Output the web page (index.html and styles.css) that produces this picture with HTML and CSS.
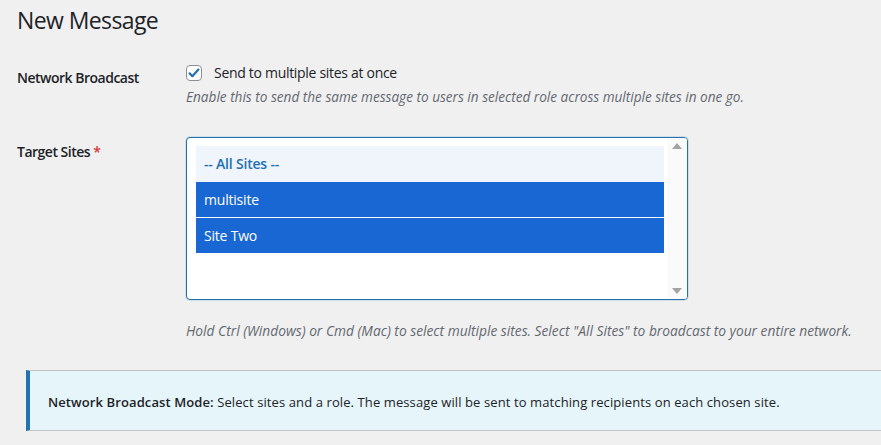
FILE: index.html
```html
<!DOCTYPE html>
<html lang="en">
<head>
  <meta charset="UTF-8">
  <meta name="viewport" content="width=device-width, initial-scale=1.0">
  <title>New Message</title>
  <link rel="stylesheet" href="styles.css">
</head>
<body>
  <div class="wrap">
    <h1>New Message</h1>

    <div class="form-table">
      <div class="row row-broadcast">
        <div class="label">Network Broadcast</div>
        <div class="field">
          <label class="check">
            <span class="checkbox">
              <svg viewBox="0 0 16 16" width="16" height="16">
                <path d="M3.6 8.4l2.8 2.8 6-6.6" fill="none" stroke="#2271b1" stroke-width="2.2" stroke-linecap="round" stroke-linejoin="round"/>
              </svg>
            </span>
            Send to multiple sites at once
          </label>
          <p class="description">Enable this to send the same message to users in selected role across multiple sites in one go.</p>
        </div>
      </div>

      <div class="row row-sites">
        <div class="label">Target Sites <span class="required">*</span></div>
        <div class="field">
          <div class="site-select">
            <ul class="options">
              <li class="option option-all">-- All Sites --</li>
              <li class="option selected">multisite</li>
              <li class="option selected">Site Two</li>
            </ul>
            <div class="scrollbar">
              <span class="arrow arrow-up"></span>
              <span class="arrow arrow-down"></span>
            </div>
          </div>
          <p class="description hint">Hold Ctrl (Windows) or Cmd (Mac) to select multiple sites. Select "All Sites" to broadcast to your entire network.</p>
        </div>
      </div>
    </div>

    <div class="notice">
      <p><strong>Network Broadcast Mode:</strong> Select sites and a role. The message will be sent to matching recipients on each chosen site.</p>
    </div>
  </div>
</body>
</html>
```

FILE: styles.css
```css
:root {
  --bg: #f0f0f1;
  --text: #1d2327;
  --muted: #646970;
  --primary: #2271b1;
  --selected: #1967d2;
  --border: #8c8f94;
}

* {
  margin: 0;
  padding: 0;
  box-sizing: border-box;
}

body {
  font-family: 'Open Sans', 'Noto Sans', sans-serif;
  background-color: var(--bg);
  color: var(--text);
  font-size: 13px;
  line-height: 1.4;
}

.wrap {
  padding: 6px 0 0 17px;
}

h1 {
  font-size: 23px;
  font-weight: 400;
  line-height: 29px;
  letter-spacing: -0.6px;
  margin-bottom: 28px;
}

.row {
  display: grid;
  grid-template-columns: 169px 1fr;
}

.row-broadcast {
  margin-bottom: 30px;
}

.label {
  font-size: 14px;
  font-weight: 600;
  line-height: 20px;
  letter-spacing: -0.5px;
}

.row-broadcast .label {
  padding-top: 5px;
}

.row-sites .label {
  padding-top: 5px;
}

.required {
  color: #d63638;
}

.check {
  display: flex;
  align-items: center;
  gap: 12px;
  font-size: 14px;
  line-height: 20px;
  letter-spacing: -0.3px;
}

.checkbox {
  width: 16px;
  height: 16px;
  border: 1px solid var(--border);
  border-radius: 4px;
  background: #fff;
  display: flex;
}

.checkbox svg {
  margin: -1px;
}

.description {
  color: var(--muted);
  font-style: italic;
  font-size: 13.6px;
  line-height: 20px;
  margin-top: 4px;
}

.site-select {
  width: 502px;
  height: 163px;
  border: 1px solid var(--primary);
  border-radius: 4px;
  background: #fff;
  box-shadow: 0 0 0 1px rgba(34, 113, 177, 0.15);
  display: flex;
  padding: 8px 0 0 9px;
}

.options {
  list-style: none;
  flex: 1;
  margin-right: 3px;
}

.option {
  font-size: 14px;
  line-height: 35px;
  padding-left: 8px;
  letter-spacing: -0.2px;
}

.option-all {
  background: #f0f5fc;
  color: var(--primary);
  font-weight: 600;
  line-height: 36px;
}

.option.selected {
  background: var(--selected);
  color: #fff;
}

.option.selected + .option.selected {
  border-top: 1px solid #fff;
}

.scrollbar {
  width: 20px;
  margin-top: -8px;
  background: #fafafa;
  border-radius: 0 3px 3px 0;
  display: flex;
  flex-direction: column;
  justify-content: space-between;
  align-items: center;
  padding: 5px 0;
}

.arrow {
  width: 0;
  height: 0;
  border-left: 5px solid transparent;
  border-right: 5px solid transparent;
}

.arrow-up {
  border-bottom: 6px solid #a3a3a3;
}

.arrow-down {
  border-top: 6px solid #a3a3a3;
}

.hint {
  margin-top: 21px;
  font-size: 13.75px;
}

.notice {
  margin: 29px 0 0 9px;
  background: #e5f5fa;
  border: 1px solid #c3c4c7;
  border-left: 4px solid var(--primary);
  border-right: 0;
  padding: 21px 18px 18px;
}

.notice p {
  font-size: 13px;
  line-height: 20px;
  letter-spacing: 0.1px;
}

.notice strong {
  font-weight: 600;
}
```
